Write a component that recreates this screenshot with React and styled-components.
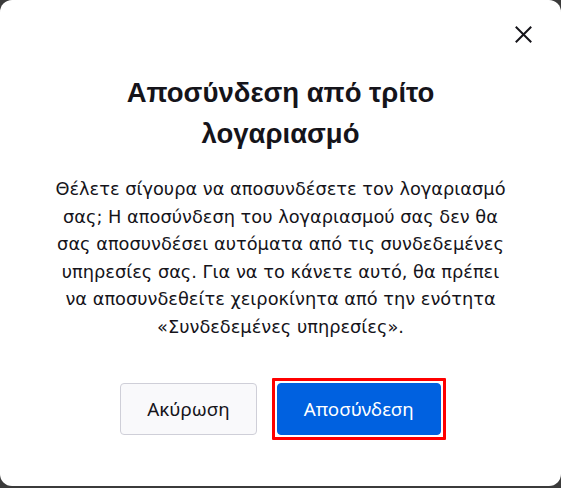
import React from 'react';
import styled, { createGlobalStyle, css } from 'styled-components';

const GlobalStyle = createGlobalStyle`
  html, body {
    margin: 0;
    padding: 0;
    background: #3b3b3b;
  }
  * {
    box-sizing: border-box;
  }
`;

const Dialog = styled.div`
  position: relative;
  width: 561px;
  height: 486px;
  background: #ffffff;
  border-radius: 12px;
  display: flex;
  flex-direction: column;
  align-items: center;
  padding-top: 72px;
  color: #15141a;
`;

const CloseButton = styled.button`
  position: absolute;
  top: 18px;
  right: 22px;
  width: 32px;
  height: 32px;
  border: none;
  background: transparent;
  padding: 0;
  display: flex;
  align-items: center;
  justify-content: center;
  cursor: pointer;
`;

const Title = styled.h1`
  margin: 0;
  max-width: 360px;
  font-family: "Liberation Sans", Arial, sans-serif;
  font-weight: 700;
  font-size: 27.5px;
  line-height: 41px;
  text-align: center;
`;

const Message = styled.p`
  margin: 21px 0 0;
  width: 460px;
  font-family: "DejaVu Sans", Verdana, sans-serif;
  font-size: 17.8px;
  line-height: 27.6px;
  text-align: center;
`;

const Actions = styled.div`
  display: flex;
  gap: 20px;
  margin-top: 42px;
`;

const Button = styled.button`
  position: relative;
  height: 52px;
  padding: 0 26px;
  border-radius: 4px;
  font-family: "Noto Sans", "Open Sans", sans-serif;
  font-size: 18.8px;
  cursor: pointer;
  border: 1px solid ${(p) => (p.$primary ? '#0060df' : '#cfcfd8')};
  background: ${(p) => (p.$primary ? '#0061e0' : '#f9f9fb')};
  color: ${(p) => (p.$primary ? '#ffffff' : '#15141a')};
  outline: none;

  ${(p) =>
    p.$focused &&
    css`
      &::after {
        content: '';
        position: absolute;
        inset: -6px;
        border: 3px solid #ff0000;
        border-radius: 1px;
        pointer-events: none;
      }
    `}
`;

export default function App() {
  return (
    <>
      <GlobalStyle />
      <Dialog>
        <CloseButton aria-label="Κλείσιμο">
          <svg width="17" height="17" viewBox="0 0 17 17">
            <path d="M1.5 1.5 L15.5 15.5 M15.5 1.5 L1.5 15.5" stroke="#15141a" strokeWidth="2" strokeLinecap="square" />
          </svg>
        </CloseButton>
        <Title>Αποσύνδεση από τρίτο λογαριασμό</Title>
        <Message>
          Θέλετε σίγουρα να αποσυνδέσετε τον λογαριασμό σας; Η αποσύνδεση του λογαριασμού σας δεν θα
          σας αποσυνδέσει αυτόματα από τις συνδεδεμένες υπηρεσίες σας. Για να το κάνετε αυτό, θα πρέπει
          να αποσυνδεθείτε χειροκίνητα από την ενότητα «Συνδεδεμένες υπηρεσίες».
        </Message>
        <Actions>
          <Button>Ακύρωση</Button>
          <Button $primary $focused>Αποσύνδεση</Button>
        </Actions>
      </Dialog>
    </>
  );
}
